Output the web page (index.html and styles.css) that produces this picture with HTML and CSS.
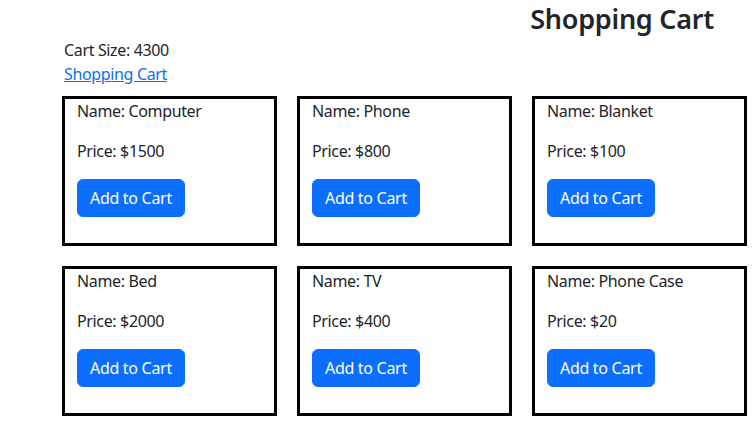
FILE: index.html
```html
<!DOCTYPE html>
<html>
<head>
<meta charset="utf-8">
<link rel="stylesheet" href="styles.css">
</head>
<body>
<div class="page">
  <div class="header">
    <h2 class="title">Shopping Cart</h2>
  </div>
  <div class="info">
    <div class="size">Cart Size: 4300</div>
    <a class="link" href="#">Shopping Cart</a>
  </div>
  <div class="grid">
    <div class="card"><p>Name: Computer</p><p>Price: $1500</p><button class="btn">Add to Cart</button></div>
    <div class="card"><p>Name: Phone</p><p>Price: $800</p><button class="btn">Add to Cart</button></div>
    <div class="card"><p>Name: Blanket</p><p>Price: $100</p><button class="btn">Add to Cart</button></div>
    <div class="card"><p>Name: Bed</p><p>Price: $2000</p><button class="btn">Add to Cart</button></div>
    <div class="card"><p>Name: TV</p><p>Price: $400</p><button class="btn">Add to Cart</button></div>
    <div class="card"><p>Name: Phone Case</p><p>Price: $20</p><button class="btn">Add to Cart</button></div>
  </div>
</div>
</body>
</html>
```

FILE: styles.css
```css
* { box-sizing: border-box; }
html, body { margin: 0; padding: 0; background: #fff; }
body {
  font-family: "Noto Sans", "Segoe UI", sans-serif;
  font-size: 16px;
  line-height: 1.5;
  color: #212529;
  letter-spacing: -0.35px;
  overflow: hidden;
}
.page { width: 755px; }
.header {
  display: flex;
  justify-content: flex-end;
  padding-right: 41px;
  height: 38px;
}
.title {
  margin: 0;
  font-size: 27px;
  font-weight: 600;
  line-height: normal;
  letter-spacing: -0.25px;
}
.info {
  padding-left: 64px;
  display: flex;
  flex-direction: column;
  align-items: flex-start;
}
.link { color: #0d6efd; text-decoration: underline; }
.grid {
  margin-top: 10px;
  margin-left: 62px;
  display: grid;
  grid-template-columns: repeat(3, 215px);
  column-gap: 20px;
  row-gap: 20px;
}
.card {
  border: 3px solid #000;
  height: 150px;
  padding: 0 12px;
}
.card p { margin: 0 0 16px 0; }
.btn {
  margin-top: 0;
  font-family: inherit;
  font-size: 16px;
  letter-spacing: -0.3px;
  line-height: 24px;
  padding: 6px 12px;
  border: 1px solid #0d6efd;
  background: #0d6efd;
  color: #fff;
  border-radius: 6px;
}
```
